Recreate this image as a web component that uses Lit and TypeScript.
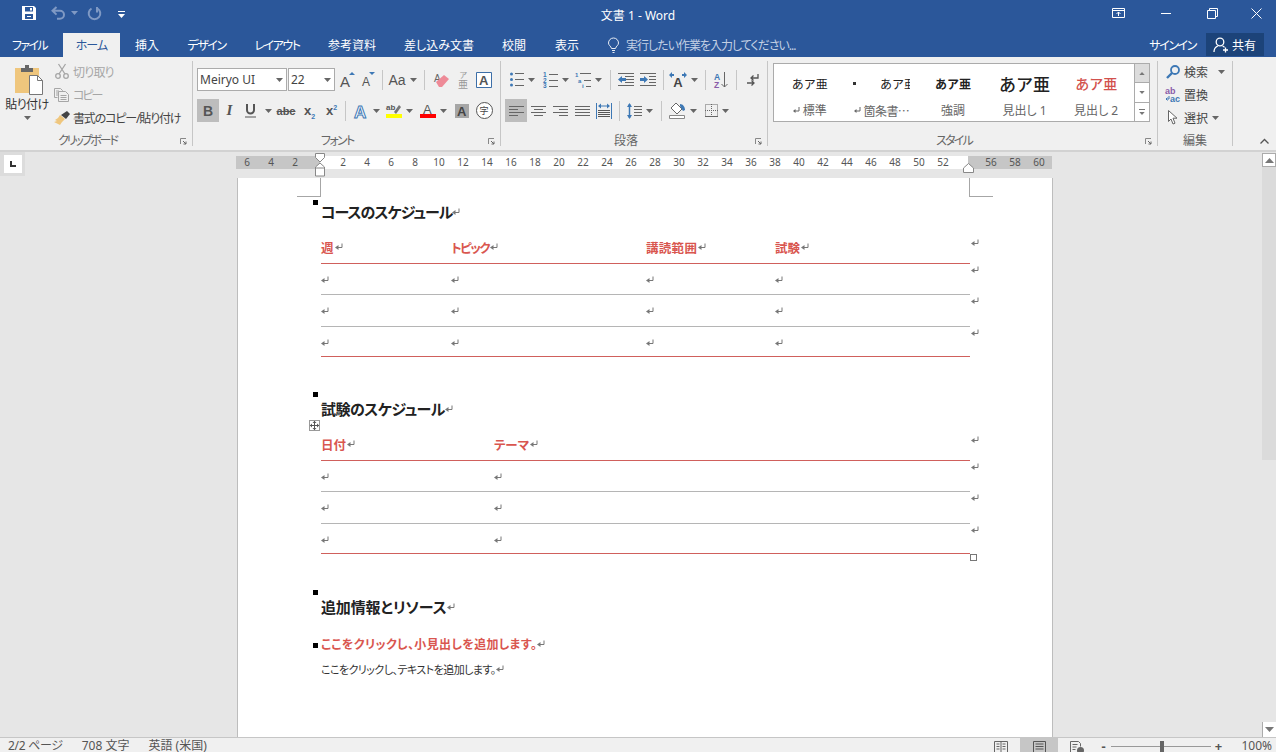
import { LitElement, html, css, svg } from "lit";
import { customElement } from "lit/decorators.js";

const arr = (c = "#666") => html`<svg class="arr" width="7" height="4" viewBox="0 0 7 4"><path d="M0 0h7L3.5 4z" fill=${c}/></svg>`;
const ret = html`<svg class="ret" width="8" height="8" viewBox="0 0 8 8" fill="none"><path d="M7 .5v4H2" stroke="#777"/><path d="M3.500 2L0 4.500 3.500 7z" fill="#777"/></svg>`;

const ic = {
  save: html`<svg width="14" height="14" viewBox="0 0 14 14"><path fill="#fff" fill-rule="evenodd" d="M0 0h12l2 2v12H0zM3 1v4.500h8V1zM3 8v5h8V8z"/><path fill="#fff" d="M8 2h2v2.500H8zM5 10h4v1H5z"/></svg>`,
  undo: html`<svg width="15" height="14" viewBox="0 0 15 14" fill="none" stroke="#7f99c4" stroke-width="2"><path d="M5.500 1L1.500 4.800l4 3.800M2 4.800h7a4 4 0 0 1 0 8H6"/></svg>`,
  redo: html`<svg width="15" height="15" viewBox="0 0 15 15" fill="none" stroke="#7f99c4" stroke-width="2"><path d="M4.500 2.500a5.800 5.800 0 1 0 6 0"/><path d="M10 1v5.500"/></svg>`,
  custom: html`<svg width="7" height="7" viewBox="0 0 7 7"><path d="M0 .5h7" stroke="#fff"/><path d="M0 3h7L3.500 7z" fill="#fff"/></svg>`,
  display: html`<svg width="13" height="10" viewBox="0 0 13 10" fill="none" stroke="#fff"><path d="M.5.500h12v9H.5zM.5 2.500h12"/><path d="M6.500 8V4M4.500 6l2-2 2 2"/></svg>`,
  min: html`<svg width="10" height="1" viewBox="0 0 10 1"><path d="M0 .5h10" stroke="#fff"/></svg>`,
  restore: html`<svg width="11" height="11" viewBox="0 0 11 11" fill="none" stroke="#fff"><path d="M.5 2.500h8v8h-8zM2.500 2.500v-2h8v8h-2"/></svg>`,
  close: html`<svg width="11" height="11" viewBox="0 0 11 11" stroke="#fff"><path d="M.5.500l10 10M10.500.500l-10 10"/></svg>`,
  bulb: html`<svg width="11" height="15" viewBox="0 0 11 15" fill="none" stroke="#e8edf5"><path d="M3.500 10.500C3 8 .5 7.500.5 5a5 5 0 0 1 10 0c0 2.500-2.500 3-3 5.500zM4 12.500h3M4.500 14.500h2"/></svg>`,
  person: html`<svg width="16" height="16" viewBox="0 0 16 16" fill="none" stroke="#fff" stroke-width="1.300"><circle cx="7" cy="5" r="3.800"/><path d="M1 15c0-3.500 1.500-5 3.800-6M9.500 9c1 .3 1.500.7 2 1.300"/><path d="M12.500 10.500v5M10 13h5"/></svg>`,
  paste: html`<svg width="28" height="30" viewBox="0 0 28 30"><path fill="#efc67d" d="M0 3h24v25H0z"/><path fill="#666" d="M6 3h12v4H6zM10 0h4v3h-4z"/><path fill="#fff" stroke="#777" d="M14.500 10.500h8l5 5v14h-13z"/><path fill="none" stroke="#777" d="M22.500 10.500v5h5"/></svg>`,
  cut: html`<svg width="14" height="15" viewBox="0 0 14 15" fill="none" stroke="#a6a6a6" stroke-width="1.300"><circle cx="3" cy="12" r="2.300"/><circle cx="11" cy="12" r="2.300"/><path d="M4 10L10.500 0M10 10L3.500 0"/></svg>`,
  copy: html`<svg width="15" height="14" viewBox="0 0 15 14" fill="none" stroke="#a6a6a6"><path d="M.5.500h6l2 2v1M.5.500v9h3M2 3h3M2 5h2M2 7h2"/><path d="M4.500 3.500h7l3 3v7h-10zM6.500 7.500h6M6.500 9.500h6M6.500 11.500h6"/></svg>`,
  brush: html`<svg width="16" height="14" viewBox="0 0 16 14"><path fill="#efc67d" d="M6 4l5 4-3 3-2 3-6-3 3-1-2-1 3-2z"/><path fill="#444" d="M7 4l6-4 3 3-4 5z"/></svg>`,
  launcher: html`<svg class="launch" width="7" height="7" viewBox="0 0 7 7" fill="none"><path d="M.5 6V.5H6" stroke="#888"/><path d="M3 3l3 3M6 3.500V6H3.500" stroke="#666"/></svg>`,
  grow: html`<svg width="15" height="17" viewBox="0 0 15 17"><text x="0" y="16" font-size="15" fill="#555" font-family="Liberation Sans">A</text><path d="M9 4l3-3 3 3z" fill="#3d78b5"/></svg>`,
  shrink: html`<svg width="13" height="15" viewBox="0 0 13 15"><text x="0" y="14" font-size="12" fill="#555" font-family="Liberation Sans">A</text><path d="M7 0h6l-3 3z" fill="#3d78b5"/></svg>`,
  clear: html`<svg width="15" height="14" viewBox="0 0 15 14"><text x="0" y="9" font-size="10" fill="#666" font-family="Liberation Sans">A</text><path d="M2 9l8-7 5 4-7 8H5z" fill="#ee8a97"/></svg>`,
  furi: html`<svg width="12" height="17" viewBox="0 0 12 17" fill="#999" font-family="Noto Sans CJK JP"><text x="2.500" y="7" font-size="8">ア</text><text x="1" y="16.500" font-size="10">亜</text></svg>`,
  boxA: html`<svg width="16" height="16" viewBox="0 0 16 16"><path fill="#fff" stroke="#3d6fa8" d="M.5.500h15v15H.5z"/><text x="3" y="13" font-size="13" fill="#555" font-weight="700" font-family="Liberation Sans">A</text></svg>`,
  uline: html`<svg width="11" height="14" viewBox="0 0 11 14" fill="none" stroke="#555" stroke-width="2"><path d="M2 0v6a3.500 3.500 0 0 0 7 0V0" /><path d="M0 13h11" stroke-width="1"/></svg>`,
  aeff: html`<svg width="16" height="16" viewBox="0 0 16 16"><text x="1" y="14.500" font-size="17" font-weight="700" fill="#fff" stroke="#3d78b5" font-family="Liberation Sans">A</text></svg>`,
  hl: html`<svg width="16" height="15" viewBox="0 0 16 15"><text x="0" y="7" font-size="8" font-weight="700" fill="#555" font-family="Liberation Sans">ab</text><path d="M8 9l5-7 2 2-5 7z" fill="#777"/><path fill="#ffff00" d="M0 11h16v4H0z"/></svg>`,
  fc: html`<svg width="16" height="15" viewBox="0 0 16 15"><text x="3" y="11" font-size="13" fill="#555" font-family="Liberation Sans">A</text><path fill="#f00" d="M0 11h16v4H0z"/></svg>`,
  shaded: html`<svg width="14" height="14" viewBox="0 0 14 14"><path fill="#a6a6a6" d="M0 0h14v14H0z"/><text x="2" y="12" font-size="13" font-weight="700" fill="#444" font-family="Liberation Sans">A</text></svg>`,
  bullets: html`<svg width="14" height="15" viewBox="0 0 14 15"><g fill="#3d78b5"><circle cx="1.500" cy="2" r="1.500"/><circle cx="1.500" cy="7.500" r="1.500"/><circle cx="1.500" cy="13" r="1.500"/></g><path d="M5 1.500h9M5 7.500h9M5 13.500h9" stroke="#666"/></svg>`,
  nums: html`<svg width="15" height="16" viewBox="0 0 15 16"><g fill="#3d78b5" font-size="6.500" font-weight="700" font-family="Liberation Sans"><text x="0" y="5">1</text><text x="0" y="10.500">2</text><text x="0" y="16">3</text></g><path d="M6 2.500h9M6 8.500h9M6 14.500h9" stroke="#666"/></svg>`,
  multi: html`<svg width="16" height="16" viewBox="0 0 16 16"><g fill="#3d78b5" font-size="6" font-weight="700" font-family="Liberation Sans"><text x="0" y="5">1</text><text x="3" y="10.500">a</text><text x="7" y="16">i</text></g><path d="M5 1.500h11M9 8.500h7M11 14.500h5" stroke="#666"/></svg>`,
  outdent: html`<svg width="16" height="13" viewBox="0 0 16 13"><path d="M0 .5h16M7 3.500h9M7 6.500h9M7 9.500h9M0 12.500h16" stroke="#666"/><path d="M0 6.500L4 3v2h4v3H4v2z" fill="#3d78b5"/></svg>`,
  indent: html`<svg width="16" height="13" viewBox="0 0 16 13"><path d="M0 .5h16M9 3.500h7M9 6.500h7M9 9.500h7M0 12.500h16" stroke="#666"/><path d="M8 6.500L4 3v2H0v3h4v2z" fill="#3d78b5"/></svg>`,
  dir: html`<svg width="18" height="15" viewBox="0 0 18 15"><text x="4.300" y="15" font-size="13" font-weight="700" fill="#444" font-family="Liberation Sans">A</text><path d="M0 3l3-3v2h2v2H3v2zM18 3l-3-3v2h-2v2h2v2z" fill="#3d78b5"/></svg>`,
  sort: html`<svg width="14" height="16" viewBox="0 0 14 16"><text x="0" y="7.500" font-size="8.500" font-weight="700" fill="#3d78b5" font-family="Liberation Sans">A</text><text x="0" y="15.500" font-size="8.500" font-weight="700" fill="#8a5ca8" font-family="Liberation Sans">Z</text><path d="M10.500 0v15M7.500 12l3 3 3-3" fill="none" stroke="#666"/></svg>`,
  pil: html`<svg width="12" height="14" viewBox="0 0 12 14" fill="none" stroke="#555" stroke-width="1.300"><path d="M11 1v4H4M6.500 2.500L4 5l2.500 2.500"/><path d="M0 10h7M4.500 7.500L7 10l-2.500 2.500"/></svg>`,
  dist: html`<svg width="16" height="16" viewBox="0 0 16 16"><path d="M.5 0v16M15.500 0v16" stroke="#3d78b5"/><path d="M3 3h10" stroke="#3d78b5"/><path d="M2 3l3-2.500v5zM14 3l-3-2.500v5z" fill="#3d78b5"/><path d="M2 7.500h12M2 9.500h12M2 11.500h12M2 13.500h12" stroke="#555"/></svg>`,
  spacing: html`<svg width="15" height="16" viewBox="0 0 15 16"><path d="M2.500 1v14" stroke="#3d78b5" stroke-width="1.500"/><path d="M0 4l2.500-4L5 4zM0 12l2.500 4L5 12z" fill="#3d78b5"/><path d="M7 3.500h8M7 6.500h8M7 9.500h8M7 12.500h8" stroke="#666"/></svg>`,
  shade: html`<svg width="17" height="17" viewBox="0 0 17 17"><path d="M7 1l6 6-5 5-6-6z" fill="#fff" stroke="#666"/><path d="M11 2c3 0 5 3 5 6l-2 1-3-5z" fill="#3d78b5"/><path d="M.5 13.500h15v3H.5z" fill="#fff" stroke="#888"/></svg>`,
  border: html`<svg width="13" height="13" viewBox="0 0 13 13" fill="none" stroke="#666" stroke-dasharray="1 1"><path d="M.5.500h12v12H.5zM6.500 0v13M0 6.500h13"/><path d="M0 12.500h13" stroke-dasharray="none"/></svg>`,
  search: html`<svg width="14" height="14" viewBox="0 0 14 14" fill="none" stroke="#3d78b5"><circle cx="9" cy="5" r="4" stroke-width="1.800"/><path d="M6 8L1 13" stroke-width="2.400"/></svg>`,
  replace: html`<svg width="16" height="15" viewBox="0 0 16 15"><text x="0" y="7" font-size="9" font-weight="700" fill="#8a5ca8" font-family="Liberation Sans">ab</text><text x="5" y="15" font-size="9" font-weight="700" fill="#3d78b5" font-family="Liberation Sans">ac</text><path d="M4 9v3H1M2.500 10.500L1 12l1.500 1.500" fill="none" stroke="#3d78b5"/></svg>`,
  select: html`<svg width="10" height="15" viewBox="0 0 10 15"><path d="M.5.500v11l2.500-2.500 2 5 2-.8-2-5h4z" fill="#fff" stroke="#666"/></svg>`,
  chevron: html`<svg width="9" height="5" viewBox="0 0 9 5" fill="none" stroke="#555" stroke-width="1.300"><path d="M.5 4.500l4-4 4 4"/></svg>`,
  book: html`<svg width="14" height="12" viewBox="0 0 14 12" fill="none" stroke="#666"><path d="M.5.500h13v11H.5zM7 .5v11M2.500 3h3M2.500 5.500h3M2.500 8h3M8.500 3h3M8.500 5.500h3M8.500 8h3"/></svg>`,
  doc: html`<svg width="13" height="12" viewBox="0 0 13 12" fill="none" stroke="#555"><path d="M.5.500h12v11H.5zM2.500 3h8M2.500 5.500h8M2.500 8h8"/></svg>`,
  web: html`<svg width="14" height="13" viewBox="0 0 14 13"><path d="M.5.500h8l2 2v3M.5.500v11h5M2.500 3.500h5M2.500 6h4M2.500 8.500h3" fill="none" stroke="#666"/><circle cx="10.500" cy="9.500" r="3.500" fill="#666"/></svg>`,
  move: html`<svg width="9" height="9" viewBox="0 0 9 9"><path d="M4.500 0v9M0 4.500h9" stroke="#555"/><path d="M4.500 0l-2 2h4zM4.500 9l-2-2h4zM0 4.500l2-2v4zM9 4.500l-2-2v4z" fill="#555"/></svg>`,
  up: html`<svg width="9" height="5" viewBox="0 0 9 5"><path d="M0 5l4.500-5L9 5z" fill="#777"/></svg>`,
  down: html`<svg width="9" height="5" viewBox="0 0 9 5"><path d="M0 0l4.500 5L9 0z" fill="#777"/></svg>`,
  mini: html`<svg class="mini" width="7" height="7" viewBox="0 0 7 7" fill="none"><path d="M6 0v4H2" stroke="#666"/><path d="M2.500 2L0 4l2.500 2z" fill="#666"/></svg>`,
};

const align = (ws: [number, number][]) => html`<svg width="15" height="10" viewBox="0 0 15 10">${ws.map(([x, w], i) => svg`<path d="M${x} ${i * 3 + 0.5}h${w}" stroke="#666"/>`)}</svg>`;

const rulerNums = [-6, -4, -2, 0, 2, 4, 6, 8, 10, 12, 14, 16, 18, 20, 22, 24, 26, 28, 30, 32, 34, 36, 38, 40, 42, 44, 46, 48, 50, 52, 54, 56, 58, 60];

@customElement("app-root")
export class AppRoot extends LitElement {
  static styles = css`
    :host { display: block; width: 1276px; height: 752px; overflow: hidden; font-family: "Noto Sans", "Noto Sans CJK JP", sans-serif; font-feature-settings: "palt"; color: #444; font-size: 12px; }
    svg { flex: none; display: block; overflow: visible; }
    .app { display: flex; flex-direction: column; height: 752px; background: #e6e6e6; }
    .title { height: 33px; flex: none; background: #2b579a; display: grid; grid-template-columns: 1fr auto 1fr; color: #fff; }
    .qat { display: flex; align-items: center; padding-left: 22px; height: 26px; }
    .qat .undo { margin-left: 15px; }
    .qat .dd { margin-left: 5px; }
    .qat .redo { margin-left: 9px; }
    .qat .cust { margin-left: 16px; margin-top: 2px; }
    .doc-title { font-size: 12px; height: 32px; line-height: 32px; }
    .win { display: grid; grid-template-columns: 47px 47px 47px 40px; justify-self: end; justify-items: center; align-items: center; height: 26px; }
    .tabs { height: 24px; flex: none; background: #2b579a; display: grid; grid-template-columns: 63px 57px 54px 65px 76px 74px 100px 50px 56px auto 1fr; align-items: stretch; color: #fff; font-size: 12px; }
    .tab { display: flex; align-items: center; justify-content: center; white-space: nowrap; }
    .tab.file { justify-content: flex-start; padding-left: 12px; letter-spacing: -1.7px; }
    .tab.on { background: #f0f0f0; color: #2b579a; letter-spacing: -1px; }
    .tab.k { letter-spacing: -1.45px; }
    .tell { display: flex; align-items: center; gap: 7px; margin-left: 13px; color: #c3d0e4; letter-spacing: -1px; white-space: nowrap; }
    .acct { justify-self: end; display: flex; align-items: stretch; margin-right: 12px; }
    .signin { display: flex; align-items: center; margin-right: 10px; letter-spacing: -1.4px; }
    .share { width: 58px; height: 23px; background: #1c4379; display: flex; align-items: center; gap: 3px; padding-left: 7px; box-sizing: border-box; }
    .ribbon { height: 93px; flex: none; background: #f0f0f0; display: flex; border-bottom: 2px solid #d2d2d2; }
    .group { margin: 4px 0; height: 85px; box-sizing: border-box; border-right: 1px solid #c6c6c6; display: flex; flex-direction: column; flex: none; }
    .g1 { width: 193px; } .g2 { width: 308px; } .g3 { width: 267px; } .g4 { width: 390px; } .g5 { width: 75px; }
    .body { flex: 1; min-height: 0; }
    .glabel { height: 14px; margin-bottom: -2px; display: grid; align-items: center; line-height: 14px; font-size: 12px; color: #666; }
    .g1 .glabel { grid-template-columns: 58px auto 1fr; letter-spacing: -2.2px; }
    .g2 .glabel { grid-template-columns: 128px auto 1fr; letter-spacing: -1.7px; }
    .g3 .glabel { grid-template-columns: 113px auto 1fr; }
    .g4 .glabel { grid-template-columns: 168px auto 1fr; letter-spacing: -1.75px; }
    .g5 .glabel { grid-template-columns: 25px auto 1fr; }
    .glabel span { grid-column: 2; white-space: nowrap; }
    .launch { grid-column: 3; justify-self: end; margin-right: 5px; }
    .clip { display: flex; }
    .paste { width: 54px; display: flex; flex-direction: column; align-items: center; padding-top: 4px; color: #333; }
    .paste > svg:first-child { margin-left: 4px; }
    .paste .lab { margin-top: 2px; line-height: 16px; letter-spacing: -.5px; white-space: nowrap; }
    .paste .arr { margin-top: 3px; }
    .vlist { display: flex; flex-direction: column; margin-top: -1px; }
    .vitem { height: 23px; display: flex; align-items: center; white-space: nowrap; }
    .vitem .i { width: 23px; margin-left: -4px; display: flex; justify-content: center; flex: none; }
    .vitem.dim { color: #a6a6a6; }
    .cut { letter-spacing: -.8px; }
    .cop { letter-spacing: -2px; }
    .fmt { letter-spacing: -1.15px; }
    .rows { padding: 7px 0 0 4px; display: flex; flex-direction: column; gap: 8px; }
    .row { height: 23px; display: grid; align-items: center; }
    .f1 { grid-template-columns: 90px 48px 25px 17px 10px 31px 12px 22px 22px 20px; }
    .f2 { grid-template-columns: 22px 21px 36px 20px 27px 17px 10px 33px 33px 35px 22px 22px; }
    .p1 { grid-template-columns: 34px 34px 31px 12px 20px 24px 6px 35px 8px 24px 6px 27px; }
    .p2 { grid-template-columns: 22px 23px 21px 22px 22px 8px 34px 8px 35px 34px; }
    .s { display: flex; align-items: center; justify-content: center; height: 23px; gap: 4px; white-space: nowrap; }
    .s.wide { gap: 9px; }
    .on-t { background: #bdbdbd; }
    .sep { width: 1px; height: 20px; background: #c6c6c6; display: block; flex: none; }
    .combo { height: 23px; box-sizing: border-box; border: 1px solid #ababab; background: #fff; display: flex; align-items: center; justify-content: space-between; padding: 0 3px 0 2px; font-size: 12px; color: #444; }
    .combo.size { margin-left: 1px; }
    .ltr { font-family: "Liberation Sans", sans-serif; color: #555; }
    .b { font-weight: 700; font-size: 14px; }
    .i2 { font-family: "Liberation Serif", serif; font-style: italic; font-size: 15px; font-weight: 700; color: #555; }
    .abc { font-size: 11px; font-weight: 700; text-decoration: line-through; }
    .xx { font-size: 13px; font-weight: 700; }
    .xx sub, .xx sup { font-size: 7px; color: #3d78b5; line-height: 0; }
    .aa { font-size: 14px; }
    .circ { width: 15px; height: 15px; border: 1px solid #555; border-radius: 50%; display: flex; align-items: center; justify-content: center; font-size: 9px; background: #fff; }
    .gallery { margin: 2px 0 0 5px; width: 377px; height: 59px; box-sizing: border-box; border: 1px solid #ababab; background: #fff; display: flex; }
    .items { display: grid; grid-template-columns: repeat(5, 71.6px); width: 362px; }
    .st { display: flex; flex-direction: column; align-items: center; overflow: hidden; }
    .st .sample { height: 38px; display: flex; align-items: center; color: #222; white-space: nowrap; font-size: 12px; font-family: "Noto Sans CJK JP", sans-serif; font-feature-settings: normal; }
    .st .name { color: #666; display: flex; align-items: center; gap: 3px; height: 16px; white-space: nowrap; font-family: "Noto Sans", "Noto Sans CJK JP", sans-serif; }
    .st .name .cj { font-family: "Noto Sans CJK JP", sans-serif; font-feature-settings: normal; letter-spacing: -.6px; }
    .dot { width: 3px; height: 3px; background: #333; margin-right: 24px; display: block; }
    .clipped { width: 30px; overflow: hidden; }
    .s3 { font-weight: 700; }
    .st .s4 { font-size: 17px; font-weight: 500; }
    .st .s5 { font-size: 14px; color: #d2514d; font-weight: 500; }
    .gbtns { width: 14px; display: flex; flex-direction: column; margin-left: auto; border-left: 1px solid #ababab; }
    .gbtns div { flex: 1; display: flex; align-items: center; justify-content: center; border-bottom: 1px solid #ababab; background: #fff; }
    .gbtns div:first-child { background: #dcdcdc; }
    .gbtns div:last-child { border-bottom: 0; flex-direction: column; gap: 2px; }
    .gbtns svg { width: 6px; height: 3px; }
    .gbtns svg.bar { height: 1px; }
    .edit { padding-left: 3px; }
    .edit .vitem .i { width: 23px; margin-left: 0; }
    .edit .far { margin-left: 10px; }
    .edit .near { margin-left: 4px; }
    .rest { flex: 1; display: flex; justify-content: flex-end; align-items: flex-end; padding: 0 7px 6px 0; }
    .work { flex: 1; min-height: 0; display: flex; }
    .main { flex: 1; min-width: 0; display: flex; flex-direction: column; }
    .rul-row { height: 26px; flex: none; display: flex; align-items: flex-start; }
    .tabstop { width: 25px; height: 24px; background: #dcdcdc; display: flex; align-items: center; justify-content: center; flex: none; }
    .tabstop i { width: 18px; height: 18px; background: #fff; display: flex; align-items: center; justify-content: center; }
    .tabstop i::after { content: ""; width: 4px; height: 4px; border-left: 2px solid #333; border-bottom: 2px solid #333; }
    .ruler { margin: 4px 0 0 211px; width: 816px; height: 13px; background: linear-gradient(90deg, #c6c6c6 84px, #fff 84px, #fff 732px, #c6c6c6 732px); display: flex; position: relative; font-size: 10px; line-height: 13px; color: #555; }
    .ruler span { width: 24px; text-align: center; flex: none; }
    .ruler span:first-child { margin-left: -1px; }
    .hour { position: absolute; left: 78px; top: -3px; }
    .rmark { position: absolute; left: 727px; top: 7px; }
    .page { margin-left: 237px; width: 816px; flex: 1; box-sizing: border-box; background: #fff; border-left: 1px solid #bdbdbd; border-right: 1px solid #bdbdbd; padding: 22px 0 0 83px; position: relative; overflow: hidden; font-family: "Noto Sans CJK JP", sans-serif; }
    .crop { position: absolute; top: 0; width: 24px; height: 19px; box-sizing: border-box; border-bottom: 1px solid #a6a6a6; }
    .crop.l { left: 59px; border-right: 1px solid #a6a6a6; }
    .crop.r { left: 731px; border-left: 1px solid #a6a6a6; }
    .wrap { width: 649px; position: relative; }
    h2 { margin: 0; font-size: 15px; line-height: 24px; height: 24px; font-weight: 700; color: #222; letter-spacing: -.55px; position: relative; display: flex; align-items: center; }
    h2.first { letter-spacing: -1px; }
    h2.second { margin-top: 40px; }
    h2.third { margin-top: 41px; letter-spacing: -.15px; }
    h2::before, h3::before { content: ""; position: absolute; left: -8px; top: -5px; width: 5px; height: 5px; background: #000; }
    h2.first::before { top: 0; }
    .tbl { position: relative; width: 649px; }
    .tr { display: grid; position: relative; box-sizing: border-box; border-bottom: 1px solid #b5b5b5; }
    .tr.hd { height: 40px; border-color: #d0605c; padding-top: 14px; }
    .tr.bt { border-color: #d0605c; }
    .h1 { height: 31px; } .h2 { height: 32px; } .h3 { height: 30px; }
    .c4 { grid-template-columns: 130px 195px 129px 195px; }
    .c2 { grid-template-columns: 173px 476px; }
    .cell { display: flex; align-items: flex-start; padding-top: 12px; }
    .hd .cell { padding-top: 0; align-items: center; height: 18px; color: #d9564f; font-weight: 700; font-size: 12.500px; }
    .hd .cell.k { letter-spacing: -1.5px; }
    .hd .cell.w { letter-spacing: .3px; }
    .hd .cell .ret { margin-left: 1px; }
    .end { position: absolute; left: 650px; top: 2px; display: flex; }
    .hd .end { top: 15px; }
    .grip { position: absolute; left: -12px; top: -1px; width: 11px; height: 11px; box-sizing: border-box; border: 1px solid #999; background: #fff; display: flex; align-items: center; justify-content: center; }
    .resize { position: absolute; left: 649px; bottom: -7px; width: 7px; height: 7px; box-sizing: border-box; border: 1px solid #777; background: #fff; }
    h3 { margin: 14px 0 0; font-size: 12px; line-height: 22px; height: 22px; font-weight: 700; color: #d9564f; position: relative; display: flex; align-items: center; letter-spacing: .35px; }
    h3::before { top: 10px; }
    .para { margin: 3px 0 0; font-size: 11px; line-height: 22px; color: #333; display: flex; align-items: center; letter-spacing: -.55px; }
    .vs { width: 14px; flex: none; display: flex; flex-direction: column; background: #e6e6e6; }
    .vbtn { height: 14px; flex: none; background: #fff; border: 1px solid #ababab; box-sizing: border-box; display: flex; align-items: center; justify-content: center; }
    .vbtn.top { margin-top: 1px; }
    .thumb { height: 293px; flex: none; background: #dbdbdb; }
    .vfill { flex: 1; }
    .vbtn.bot { height: 15px; border-width: 0 0 0 1px; }
    .status { height: 15px; box-sizing: border-box; flex: none; background: #f0f0f0; border-top: 1px solid #c6c6c6; display: flex; align-items: flex-end; font-size: 12px; color: #555; white-space: nowrap; }
    .status .tx { line-height: 12px; height: 12px; }
    .st1 { margin-left: 8px; letter-spacing: -.3px; } .st2 { margin-left: 19px; } .st3 { margin-left: 19px; }
    .sright { margin-left: auto; display: grid; grid-template-columns: 38px 38px 38px 15px 100px 15px 50px; align-items: stretch; height: 14px; }
    .sright > div { display: flex; justify-content: center; align-items: flex-end; line-height: 12px; }
    .sright .ico { overflow: hidden; padding-top: 3px; align-items: flex-start; }
    .sright .act { background: #c6c6c6; }
    .sright .slider { position: relative; align-items: center; padding-top: 2px; box-sizing: border-box; }
    .slider::before { content: ""; width: 100px; height: 1px; background: #999; }
    .slider::after { content: ""; position: absolute; left: 49px; top: 3px; width: 4px; height: 11px; background: #666; }
    .pm { font-size: 13px; font-weight: 700; }
    .sright > .pct { font-size: 12px; justify-content: flex-end; padding-right: 4px; }
  `;

  row4(row: string) {
    return html`<div class="tr ${row}">${[0, 1, 2, 3].map(() => html`<div class="cell">${ret}</div>`)}<span class="end">${ret}</span></div>`;
  }
  row2(row: string) {
    return html`<div class="tr ${row}">${[0, 1].map(() => html`<div class="cell">${ret}</div>`)}<span class="end">${ret}</span></div>`;
  }

  render() {
    const tabs: [string, string][] = [["挿入", ""], ["デザイン", "k"], ["レイアウト", "k"], ["参考資料", ""], ["差し込み文書", ""], ["校閲", ""], ["表示", ""]];
    const sep = html`<i class="sep"></i>`;
    const a = arr();
    return html`<div class="app">
      <div class="title">
        <div class="qat">${ic.save}<span class="undo">${ic.undo}</span><span class="dd">${arr("#7f99c4")}</span><span class="redo">${ic.redo}</span><span class="cust">${ic.custom}</span></div>
        <div class="doc-title">文書 1 - Word</div>
        <div class="win">${ic.display}${ic.min}${ic.restore}${ic.close}</div>
      </div>
      <div class="tabs">
        <div class="tab file">ファイル</div><div class="tab on">ホーム</div>
        ${tabs.map(([t, k]) => html`<div class="tab ${k}">${t}</div>`)}
        <div class="tell">${ic.bulb}<span>実行したい作業を入力してください...</span></div>
        <div class="acct"><span class="signin">サインイン</span><div class="share">${ic.person}<span>共有</span></div></div>
      </div>
      <div class="ribbon">
        <section class="group g1">
          <div class="body clip">
            <div class="paste">${ic.paste}<span class="lab">貼り付け</span>${a}</div>
            <div class="vlist">
              <div class="vitem dim cut"><span class="i">${ic.cut}</span>切り取り</div>
              <div class="vitem dim cop"><span class="i">${ic.copy}</span>コピー</div>
              <div class="vitem fmt"><span class="i">${ic.brush}</span>書式のコピー/貼り付け</div>
            </div>
          </div>
          <div class="glabel"><span>クリップボード</span>${ic.launcher}</div>
        </section>
        <section class="group g2">
          <div class="body rows">
            <div class="row f1">
              <div class="combo"><span>Meiryo UI</span>${a}</div><div class="combo size"><span>22</span>${a}</div>
              <div class="s">${ic.grow}</div><div class="s">${ic.shrink}</div><div class="s">${sep}</div>
              <div class="s"><span class="ltr aa">Aa</span>${a}</div><div class="s">${sep}</div>
              <div class="s">${ic.clear}</div><div class="s">${ic.furi}</div><div class="s">${ic.boxA}</div>
            </div>
            <div class="row f2">
              <div class="s on-t ltr b">B</div><div class="s i2">I</div><div class="s wide">${ic.uline}${a}</div>
              <div class="s ltr abc">abc</div><div class="s ltr xx"><span>x<sub>2</sub></span></div><div class="s ltr xx"><span>x<sup>2</sup></span></div><div class="s">${sep}</div>
              <div class="s">${ic.aeff}${a}</div><div class="s">${ic.hl}${a}</div><div class="s">${ic.fc}${a}</div>
              <div class="s">${ic.shaded}</div><div class="s"><span class="circ">字</span></div>
            </div>
          </div>
          <div class="glabel"><span>フォント</span>${ic.launcher}</div>
        </section>
        <section class="group g3">
          <div class="body rows">
            <div class="row p1">
              <div class="s">${ic.bullets}${a}</div><div class="s">${ic.nums}${a}</div><div class="s">${ic.multi}${a}</div><div class="s">${sep}</div>
              <div class="s">${ic.outdent}</div><div class="s">${ic.indent}</div><div class="s">${sep}</div>
              <div class="s">${ic.dir}${a}</div><div class="s">${sep}</div><div class="s">${ic.sort}</div><div class="s">${sep}</div><div class="s">${ic.pil}</div>
            </div>
            <div class="row p2">
              <div class="s on-t">${align([[0, 15], [0, 9], [0, 15], [0, 9]])}</div>
              <div class="s">${align([[0, 15], [3, 9], [0, 15], [3, 9]])}</div>
              <div class="s">${align([[0, 15], [6, 9], [0, 15], [6, 9]])}</div>
              <div class="s">${align([[0, 15], [0, 15], [0, 15], [0, 15]])}</div>
              <div class="s">${ic.dist}</div><div class="s">${sep}</div><div class="s">${ic.spacing}${a}</div><div class="s">${sep}</div>
              <div class="s">${ic.shade}${a}</div><div class="s">${ic.border}${a}</div>
            </div>
          </div>
          <div class="glabel"><span>段落</span>${ic.launcher}</div>
        </section>
        <section class="group g4">
          <div class="body">
            <div class="gallery">
              <div class="items">
                <div class="st"><div class="sample">あア亜</div><div class="name">${ic.mini}標準</div></div>
                <div class="st"><div class="sample"><i class="dot"></i><span class="clipped">あア亜</span></div><div class="name">${ic.mini}<span class="cj">箇条書…</span></div></div>
                <div class="st"><div class="sample s3">あア亜</div><div class="name">強調</div></div>
                <div class="st"><div class="sample s4">あア亜</div><div class="name">見出し 1</div></div>
                <div class="st"><div class="sample s5">あア亜</div><div class="name">見出し 2</div></div>
              </div>
              <div class="gbtns"><div>${ic.up}</div><div>${ic.down}</div><div><svg class="bar" width="6" height="1" viewBox="0 0 6 1"><path d="M0 .5h6" stroke="#777"/></svg>${ic.down}</div></div>
            </div>
          </div>
          <div class="glabel"><span>スタイル</span>${ic.launcher}</div>
        </section>
        <section class="group g5">
          <div class="body vlist edit">
            <div class="vitem"><span class="i">${ic.search}</span>検索<span class="far">${a}</span></div>
            <div class="vitem"><span class="i">${ic.replace}</span>置換</div>
            <div class="vitem"><span class="i">${ic.select}</span>選択<span class="near">${a}</span></div>
          </div>
          <div class="glabel"><span>編集</span></div>
        </section>
        <div class="rest">${ic.chevron}</div>
      </div>
      <div class="work">
        <div class="main">
          <div class="rul-row">
            <div class="tabstop"><i></i></div>
            <div class="ruler">
              ${rulerNums.map((n) => html`<span>${n === 0 || n === 54 ? "" : Math.abs(n)}</span>`)}
              <svg class="hour" width="12" height="24" viewBox="0 0 12 24" fill="#fff" stroke="#888"><path d="M1.500.500h9v4l-4.500 4.500-4.500-4.500zM6 10l4.500 4v9h-9v-9zM1.500 15h9"/></svg>
              <svg class="rmark" width="11" height="10" viewBox="0 0 11 10" fill="#fff" stroke="#888"><path d="M5.500.500l5 4.500v4.500H.5V5z"/></svg>
            </div>
          </div>
          <div class="page">
            <i class="crop l"></i><i class="crop r"></i>
            <div class="wrap">
              <h2 class="first">コースのスケジュール${ret}</h2>
              <div class="tbl">
                <div class="tr hd c4"><div class="cell">週${ret}</div><div class="cell k">トピック${ret}</div><div class="cell w">講読範囲${ret}</div><div class="cell">試験${ret}</div><span class="end">${ret}</span></div>
                ${this.row4("c4 h1")}${this.row4("c4 h2")}${this.row4("c4 h3 bt")}
              </div>
              <h2 class="second">試験のスケジュール${ret}</h2>
              <div class="tbl">
                <span class="grip">${ic.move}</span>
                <div class="tr hd c2"><div class="cell">日付${ret}</div><div class="cell">テーマ${ret}</div><span class="end">${ret}</span></div>
                ${this.row2("c2 h1")}${this.row2("c2 h2")}${this.row2("c2 h3 bt")}
                <i class="resize"></i>
              </div>
              <h2 class="third">追加情報とリソース${ret}</h2>
              <h3>ここをクリックし、小見出しを追加します。${ret}</h3>
              <p class="para">ここをクリックし、テキストを追加します。${ret}</p>
            </div>
          </div>
        </div>
        <div class="vs">
          <div class="vbtn top">${ic.up}</div>
          <div class="thumb"></div>
          <div class="vfill"></div>
          <div class="vbtn bot">${ic.down}</div>
        </div>
      </div>
      <div class="status">
        <span class="tx st1">2/2 ページ</span><span class="tx st2">708 文字</span><span class="tx st3">英語 (米国)</span>
        <div class="sright">
          <div class="ico">${ic.book}</div><div class="ico act">${ic.doc}</div><div class="ico">${ic.web}</div>
          <div class="pm">-</div><div class="slider"></div><div class="pm">+</div><div class="pct">100%</div>
        </div>
      </div>
    </div>`;
  }
}
